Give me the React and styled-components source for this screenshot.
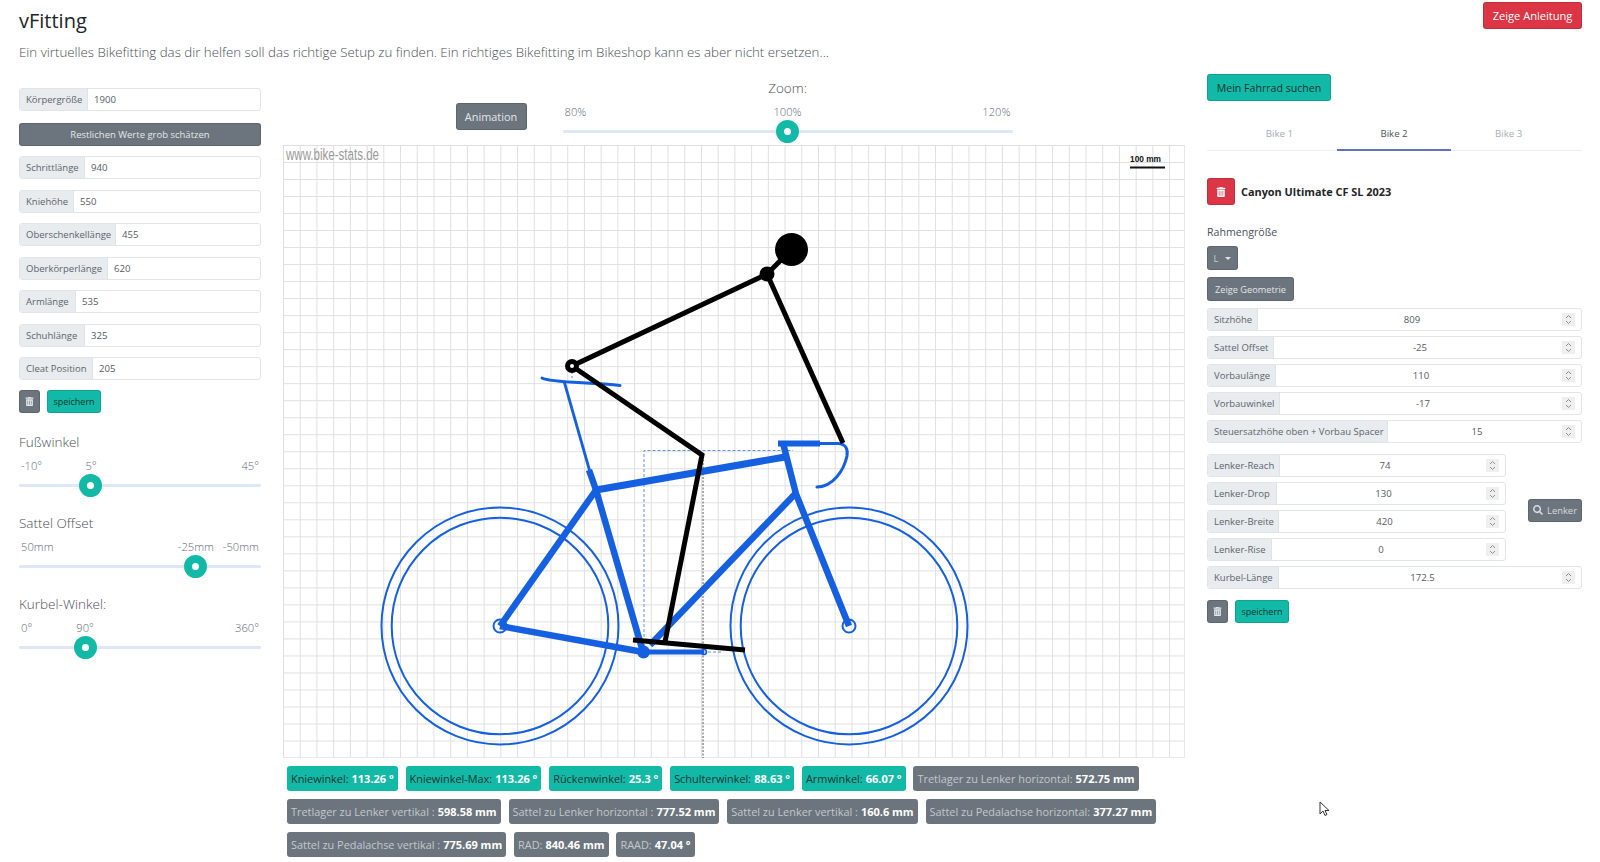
import React from 'react';
import styled, { createGlobalStyle } from 'styled-components';
import { FaTrashAlt, FaSearch } from 'react-icons/fa';

const TEAL = '#12b9a7';
const GREY = '#6c757d';
const BLUE = '#1560e0';

const GlobalStyle = createGlobalStyle`
  html, body {
    margin: 0;
    padding: 0;
    background: #fff;
    overflow: hidden;
  }
  body {
    font-family: 'Open Sans', 'Noto Sans', sans-serif;
    color: #495057;
  }
  * {
    box-sizing: border-box;
  }
`;

const Page = styled.div`
  position: relative;
  width: 1600px;
  height: 862px;
  padding: 0 18px 0 19px;
  overflow: hidden;
`;

const Header = styled.header`
  height: 74px;
  display: flex;
  justify-content: space-between;
  align-items: flex-start;
`;

const Title = styled.h1`
  margin: 8px 0 0;
  font-size: 20px;
  line-height: 26px;
  font-weight: 400;
  color: #212529;
`;

const Lead = styled.p`
  margin: 8px 0 0;
  font-size: 13.3px;
  line-height: 20px;
  font-weight: 300;
  color: #495057;
`;

const Button = styled.button`
  display: inline-flex;
  align-items: center;
  justify-content: center;
  gap: 4px;
  height: ${p => p.$h || 23}px;
  width: ${p => (p.$w ? `${p.$w}px` : 'auto')};
  padding: 0;
  font-family: inherit;
  font-size: ${p => p.$size || 9.2}px;
  color: ${p => p.$color || '#e4e7ea'};
  background: ${p => p.$bg || GREY};
  border: 1px solid ${p => p.$border || 'rgba(0, 0, 0, 0.12)'};
  border-radius: 3px;
`;

const HelpButton = styled(Button)`
  margin-top: 2px;
`;

const Main = styled.main`
  display: grid;
  grid-template-columns: 242px 902px 375px;
  column-gap: 22px;
`;

const LeftColumn = styled.section`
  padding-top: 13.5px;
`;

const FormRow = styled.div`
  display: flex;
  height: 23px;
  width: ${p => (p.$w ? `${p.$w}px` : '100%')};
  margin-bottom: ${p => p.$gap}px;
  border: 1px solid #e1e4e8;
  border-radius: 3px;
  background: #fff;
  overflow: hidden;
`;

const RowLabel = styled.label`
  flex: 0 0 ${p => p.$w}px;
  display: flex;
  align-items: center;
  padding-left: 6px;
  font-size: 9.5px;
  white-space: nowrap;
  color: #5b636b;
  background: #e9ecef;
  border-right: 1px solid #dfe2e6;
`;

const RowInput = styled.input`
  flex: 1;
  min-width: 0;
  padding: ${p => (p.$center ? '0 2px 0 6px' : '0 6px')};
  border: 0;
  outline: 0;
  font-family: inherit;
  font-size: 9.6px;
  color: #555c63;
  background: transparent;
  text-align: ${p => (p.$center ? 'center' : 'left')};
`;

const Spinner = styled.span`
  flex: 0 0 13px;
  height: 13px;
  align-self: center;
  margin-right: 6px;
  background: #efefef;
`;

const SpinnerIcon = styled.svg`
  display: block;
`;

const WideButton = styled(Button)`
  width: 100%;
  margin-bottom: 10.45px;
`;

const ButtonRow = styled.div`
  display: flex;
  gap: 7px;
  margin-top: ${p => p.$top || 0}px;
`;

const SliderBox = styled.div`
  width: ${p => p.$w}px;
`;

const SliderTitle = styled.div`
  font-size: ${p => p.$size || 13.5}px;
  line-height: 18px;
  font-weight: 300;
  color: #495057;
  margin-top: ${p => p.$top || 0}px;
  text-align: ${p => (p.$center ? 'center' : 'left')};
`;

const SliderScale = styled.div`
  position: relative;
  display: flex;
  justify-content: space-between;
  padding: 0 2px;
  height: 14px;
  margin-top: ${p => p.$top}px;
  font-size: 11.2px;
  line-height: 14px;
  font-weight: 300;
  color: #5f6b7a;
`;

const ScaleCurrent = styled.span`
  position: absolute;
  transform: translateX(-50%);
`;

const Track = styled.div`
  position: relative;
  height: 3px;
  margin-top: 11px;
  background: #dfe6f5;
  border-radius: 2px;
`;

const Thumb = styled.span`
  position: absolute;
  top: -10px;
  width: 23px;
  height: 23px;
  margin-left: -11.5px;
  border-radius: 50%;
  background: #fff;
  border: 8px solid ${TEAL};
`;

const CenterColumn = styled.section`
  min-width: 0;
`;

const ZoomBar = styled.div`
  display: flex;
  justify-content: center;
  align-items: flex-start;
  gap: 36px;
  height: 71px;
  padding-top: 5px;
`;

const AnimationButton = styled(Button)`
  margin-top: 24px;
`;

const Canvas = styled.div`
  height: 613px;
  background-color: #fff;
  background-image:
    linear-gradient(to right, #dfdfdf 1px, transparent 1px),
    linear-gradient(to bottom, #dfdfdf 1px, transparent 1px);
  background-size: 16.73px 17.03px;
  border-right: 1px solid #e8e8e8;
  border-bottom: 1px solid #e8e8e8;
`;

const Drawing = styled.svg`
  display: block;
`;

const Badges = styled.div`
  display: flex;
  flex-wrap: wrap;
  gap: 8px 7.9px;
  margin-top: 8px;
  padding-left: 4px;
`;

const Badge = styled.span`
  display: inline-flex;
  align-items: center;
  height: 25px;
  padding: 0 4px;
  font-size: 10.9px;
  white-space: nowrap;
  border-radius: 3px;
  color: ${p => (p.$teal ? '#12352f' : '#c4c8cc')};
  background: ${p => (p.$teal ? TEAL : GREY)};
  b {
    margin-left: 3px;
    font-size: 11px;
    color: #fff;
    font-weight: 700;
  }
`;

const RightColumn = styled.section`
  min-width: 0;
`;

const Tabs = styled.div`
  display: flex;
  height: 31px;
  margin-top: 19px;
  padding-left: 15px;
  border-bottom: 1px solid #eceef0;
`;

const Tab = styled.div`
  flex: 0 0 114.7px;
  display: flex;
  align-items: center;
  justify-content: center;
  padding-bottom: 3px;
  font-size: 9.7px;
  color: ${p => (p.$active ? '#4b5258' : '#a8adb2')};
  border-bottom: ${p => (p.$active ? '2px solid #6470c4' : '0')};
  margin-bottom: ${p => (p.$active ? '-1px' : '0')};
`;

const BikeHead = styled.div`
  display: flex;
  align-items: center;
  gap: 6px;
  margin-top: 27px;
`;

const BikeName = styled.strong`
  font-size: 10.9px;
  font-weight: 700;
  color: #212529;
`;

const FrameLabel = styled.div`
  margin-top: 18px;
  font-size: 10.6px;
  line-height: 18px;
  color: #495057;
`;

const Caret = styled.span`
  width: 0;
  height: 0;
  margin-left: 3px;
  border-top: 3px solid #e4e7ea;
  border-left: 3px solid transparent;
  border-right: 3px solid transparent;
`;

const DropButton = styled(Button)`
  display: flex;
  margin-top: 5px;
`;

const GeometryButton = styled(Button)`
  display: flex;
  margin: 7px 0 6.5px;
`;

const HandlebarGroup = styled.div`
  position: relative;
  margin-top: 10.5px;
`;

const HandlebarButton = styled(Button)`
  position: absolute;
  right: 0;
  top: 45px;
  color: #d7dadd;
`;

const Cursor = styled.svg`
  position: absolute;
  left: 1319px;
  top: 801px;
`;

const bodyFields = [
  ['Körpergröße', '1900', 68],
];

const lowerFields = [
  ['Schrittlänge', '940', 65],
  ['Kniehöhe', '550', 54],
  ['Oberschenkellänge', '455', 96],
  ['Oberkörperlänge', '620', 88],
  ['Armlänge', '535', 56],
  ['Schuhlänge', '325', 65],
  ['Cleat Position', '205', 73],
];

const frameFields = [
  ['Sitzhöhe', '809', 50],
  ['Sattel Offset', '-25', 66],
  ['Vorbaulänge', '110', 68],
  ['Vorbauwinkel', '-17', 72],
  ['Steuersatzhöhe oben + Vorbau Spacer', '15', 180],
];

const barFields = [
  ['Lenker-Reach', '74', 72],
  ['Lenker-Drop', '130', 69],
  ['Lenker-Breite', '420', 71],
  ['Lenker-Rise', '0', 64],
];

const badges = [
  ['Kniewinkel:', '113.26 °', true],
  ['Kniewinkel-Max:', '113.26 °', true],
  ['Rückenwinkel:', '25.3 °', true],
  ['Schulterwinkel:', '88.63 °', true],
  ['Armwinkel:', '66.07 °', true],
  ['Tretlager zu Lenker horizontal:', '572.75 mm'],
  ['Tretlager zu Lenker vertikal :', '598.58 mm'],
  ['Sattel zu Lenker horizontal :', '777.52 mm'],
  ['Sattel zu Lenker vertikal :', '160.6 mm'],
  ['Sattel zu Pedalachse horizontal:', '377.27 mm'],
  ['Sattel zu Pedalachse vertikal :', '775.69 mm'],
  ['RAD:', '840.46 mm'],
  ['RAAD:', '47.04 °'],
];

const NumberSpinner = () => (
  <Spinner>
    <SpinnerIcon width="13" height="13" viewBox="0 0 13 13" fill="none" stroke="#8a8f94" strokeWidth="1">
      <path d="M4 5l2.5-2.5L9 5M4 8l2.5 2.5L9 8" />
    </SpinnerIcon>
  </Spinner>
);

const Field = ({ label, value, labelWidth, width, gap, number }) => (
  <FormRow $w={width} $gap={gap}>
    <RowLabel $w={labelWidth}>{label}</RowLabel>
    <RowInput $center={number} defaultValue={value} />
    {number && <NumberSpinner />}
  </FormRow>
);

const Slider = ({ width, min, max, current, percent, scaleTop }) => (
  <SliderBox $w={width}>
    <SliderScale $top={scaleTop}>
      <span>{min}</span>
      <ScaleCurrent style={{ left: `${percent}%` }}>{current}</ScaleCurrent>
      <span>{max}</span>
    </SliderScale>
    <Track>
      <Thumb style={{ left: `${percent}%` }} />
    </Track>
  </SliderBox>
);

const BikeDrawing = () => (
  <Drawing width="902" height="613" viewBox="283 145 902 613" fill="none">
    <text x="286" y="160" fontFamily="Liberation Sans, sans-serif" fontSize="16" fill="#9a9a9a" textLength="93" lengthAdjust="spacingAndGlyphs">
      www.bike-stats.de
    </text>
    <text x="1130" y="162" fontFamily="Liberation Sans, sans-serif" fontSize="9" fontWeight="700" fill="#111" textLength="31" lengthAdjust="spacingAndGlyphs">
      100 mm
    </text>
    <path d="M1130 167.500h35" stroke="#111" strokeWidth="2" />

    {/* hilfslinien */}
    <path d="M644 652V450.500H793" stroke="#5d91e8" strokeWidth="1" strokeDasharray="3 2" />
    <path d="M703 652h18" stroke="#5d91e8" strokeWidth="1" strokeDasharray="3 2" />
    <path d="M703 456V758" stroke="#555" strokeWidth="1" strokeDasharray="2 1.500" />
    <path d="M572 372v8" stroke="#5d91e8" strokeWidth="1" strokeDasharray="2 2" />

    {/* laufraeder */}
    <circle cx="500" cy="626" r="118.500" stroke={BLUE} strokeWidth="2" />
    <circle cx="500" cy="626" r="108.300" stroke={BLUE} strokeWidth="2" />
    <circle cx="849" cy="626" r="118.500" stroke={BLUE} strokeWidth="2" />
    <circle cx="849" cy="626" r="108.300" stroke={BLUE} strokeWidth="2" />
    <circle cx="500" cy="626" r="6.500" stroke={BLUE} strokeWidth="2" />
    <circle cx="849" cy="626" r="6.500" stroke={BLUE} strokeWidth="2" />
    <circle cx="704" cy="652" r="2.500" stroke={BLUE} strokeWidth="1.500" />

    {/* rahmen */}
    <g stroke={BLUE} strokeLinejoin="round">
      <path d="M596 490L500 626" strokeWidth="6.500" />
      <path d="M500 626L643 652" strokeWidth="6.500" />
      <path d="M589 470L596 490L643 652" strokeWidth="6.500" />
      <path d="M596 490L785 457" strokeWidth="7" />
      <path d="M796 493L650 645" strokeWidth="6.500" />
      <path d="M783 443L796 494L849 626" strokeWidth="6.500" />
      <path d="M643 652H704" strokeWidth="5" />
      <path d="M564 381L590 472" strokeWidth="2.800" />
      <path d="M778 443.500H820" strokeWidth="6" />
      <path d="M820 443.500H838C846 444 848 449 847 456C844 470 833 487 817 487" strokeWidth="3" strokeLinecap="round" />
      <path d="M542 378C550 383 590 382 620 385.500" strokeWidth="3" strokeLinecap="round" />
    </g>
    <circle cx="643.500" cy="652" r="6.500" fill={BLUE} />

    {/* fahrer */}
    <g stroke="#000" strokeWidth="5">
      <path d="M767 274L791 250" />
      <path d="M767 274L572 366L702 455L665 642" />
      <path d="M767 274L843 443" />
      <path d="M633 640L745 650" />
    </g>
    <circle cx="791.500" cy="249.500" r="16.500" fill="#000" />
    <circle cx="767" cy="274" r="7.500" fill="#000" />
    <circle cx="572" cy="366" r="4.500" fill="#fff" stroke="#000" strokeWidth="5" />
  </Drawing>
);

const App = () => (
  <Page>
    <GlobalStyle />
    <Header>
      <div>
        <Title>vFitting</Title>
        <Lead>
          Ein virtuelles Bikefitting das dir helfen soll das richtige Setup zu finden. Ein richtiges Bikefitting im
          Bikeshop kann es aber nicht ersetzen...
        </Lead>
      </div>
      <HelpButton $bg="#dc3545" $color="#fff" $w={99} $h={27} $size={11.1}>
        Zeige Anleitung
      </HelpButton>
    </Header>

    <Main>
      <LeftColumn>
        {bodyFields.map(([label, value, w]) => (
          <Field key={label} label={label} value={value} labelWidth={w} gap={10.45} />
        ))}
        <WideButton $size={9.5}>Restlichen Werte grob schätzen</WideButton>
        {lowerFields.map(([label, value, w]) => (
          <Field key={label} label={label} value={value} labelWidth={w} gap={10.45} />
        ))}
        <ButtonRow>
          <Button $w={21}>
            <FaTrashAlt size={9} />
          </Button>
          <Button $bg={TEAL} $color="#12352f" $w={54} $size={9}>
            speichern
          </Button>
        </ButtonRow>

        <SliderTitle $top={20}>Fußwinkel</SliderTitle>
        <Slider width={242} min="-10°" current="5°" max="45°" percent={29.75} scaleTop={8} />
        <SliderTitle $top={27}>Sattel Offset</SliderTitle>
        <Slider width={242} min="50mm" current="-25mm" max="-50mm" percent={73.1} scaleTop={8} />
        <SliderTitle $top={27}>Kurbel-Winkel:</SliderTitle>
        <Slider width={242} min="0°" current="90°" max="360°" percent={27.3} scaleTop={8} />
      </LeftColumn>

      <CenterColumn>
        <ZoomBar>
          <AnimationButton $w={71} $h={27} $size={10.9}>
            Animation
          </AnimationButton>
          <div>
            <SliderTitle $center>Zoom:</SliderTitle>
            <Slider width={450} min="80%" current="100%" max="120%" percent={50} scaleTop={8} />
          </div>
        </ZoomBar>
        <Canvas>
          <BikeDrawing />
        </Canvas>
        <Badges>
          {badges.map(([label, value, teal]) => (
            <Badge key={label} $teal={teal}>
              {label}
              <b>{value}</b>
            </Badge>
          ))}
        </Badges>
      </CenterColumn>

      <RightColumn>
        <Button $bg={TEAL} $color="#12352f" $w={124} $h={27} $size={10.6}>
          Mein Fahrrad suchen
        </Button>
        <Tabs>
          <Tab>Bike 1</Tab>
          <Tab $active>Bike 2</Tab>
          <Tab>Bike 3</Tab>
        </Tabs>
        <BikeHead>
          <Button $bg="#dc3545" $color="#fff" $w={28} $h={27}>
            <FaTrashAlt size={10} />
          </Button>
          <BikeName>Canyon Ultimate CF SL 2023</BikeName>
        </BikeHead>
        <FrameLabel>Rahmengröße</FrameLabel>
        <DropButton $w={31} $h={24} $color="#c8ccd0">
          L<Caret />
        </DropButton>
        <GeometryButton $w={87} $h={24}>
          Zeige Geometrie
        </GeometryButton>
        {frameFields.map(([label, value, w]) => (
          <Field key={label} label={label} value={value} labelWidth={w} gap={5.15} number />
        ))}
        <HandlebarGroup>
          {barFields.map(([label, value, w]) => (
            <Field key={label} label={label} value={value} labelWidth={w} width={299} gap={5.15} number />
          ))}
          <HandlebarButton $w={54} $size={9.4}>
            <FaSearch size={10} />
            Lenker
          </HandlebarButton>
        </HandlebarGroup>
        <Field label="Kurbel-Länge" value="172.5" labelWidth={71} gap={11} number />
        <ButtonRow>
          <Button $w={21}>
            <FaTrashAlt size={9} />
          </Button>
          <Button $bg={TEAL} $color="#12352f" $w={54} $size={9}>
            speichern
          </Button>
        </ButtonRow>
      </RightColumn>
    </Main>

    <Cursor width="12" height="16" viewBox="0 0 12 16">
      <path d="M1 1v12l3-3 2 4.500 2-1-2-4h4z" fill="#fff" stroke="#333" strokeWidth="1" />
    </Cursor>
  </Page>
);

export default App;
